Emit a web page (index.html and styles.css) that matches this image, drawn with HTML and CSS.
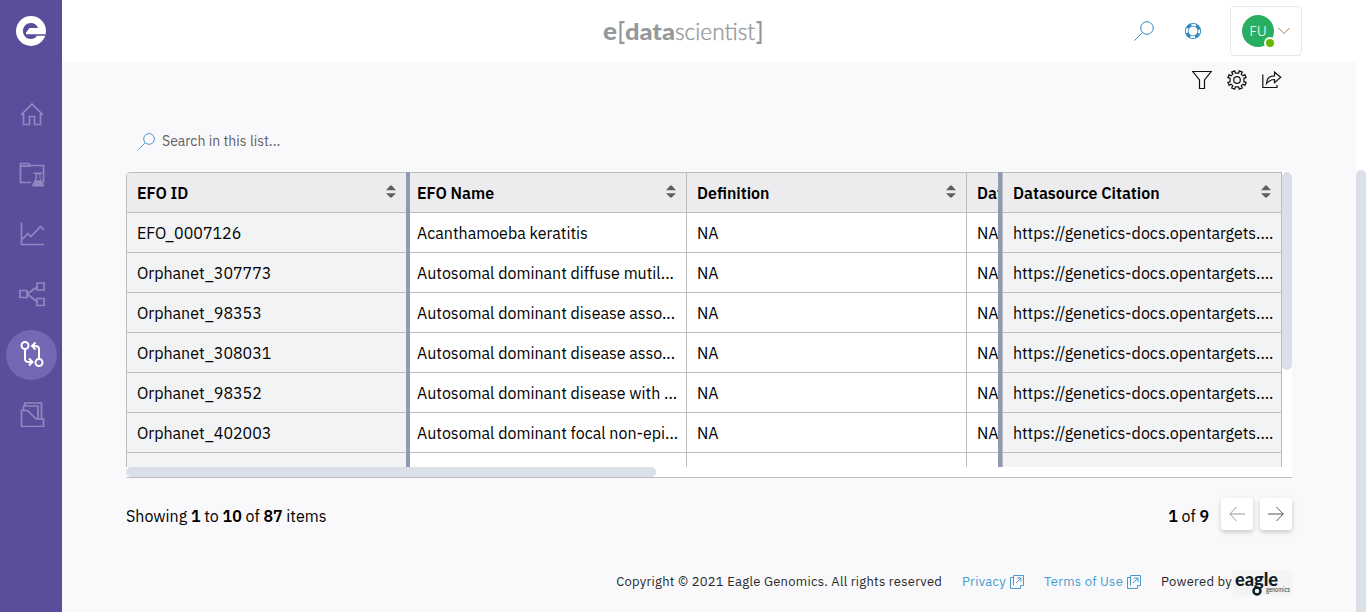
FILE: index.html
```
<!DOCTYPE html>
<html lang="en">
<head>
<meta charset="utf-8">
<title>e[datascientist]</title>
<link rel="stylesheet" href="styles.css">
</head>
<body>
<svg width="0" height="0" class="defs" aria-hidden="true">
  <symbol id="sort" viewBox="0 0 10 14"><path d="M0 5.200h10L5.700.6H4.300zM0 8.200h10L5.700 12.600H4.300z"/></symbol>
  <symbol id="search" viewBox="0 0 20 20"><circle cx="13" cy="7" r="6.300"/><path d="M8.500 11.500.4 19.600"/></symbol>
  <symbol id="external" viewBox="0 0 14 14"><path d="M3.500 2.500h-3v11h10v-3M3.500 10.500v-10h10v10h-3M6 8l5-5M7 3h4v4"/></symbol>
</svg>
<div class="app">
  <nav class="sidebar">
    <a class="brand"><svg width="30" height="30" viewBox="0 0 30 30"><circle cx="15" cy="15" r="15" fill="#fff"/><path d="M10 16.800 13.500 12h8.800C20.700 8.900 18.200 7 15 7c-4.500 0-8 3.500-8 8s3.500 8 8 8c2.600 0 4.700-1 5.800-3.200H29.500L30 18.300H10z" fill="#5a4d9b"/><path d="M10 17.200 13.500 12.500h9l1 4.700z" fill="#fff"/></svg></a>
    <a class="nav-item"><svg width="26" height="26" viewBox="0 0 26 26"><path d="M2 14 13 3l11 11M4.500 12.500v11h6v-8h5v8h6v-11"/></svg></a>
    <a class="nav-item"><svg width="26" height="26" viewBox="0 0 26 26"><path d="M12 21.500H1.500v-19h8l2 2h13V22M1.500 5.200h10"/><path class="solid" d="M14.500 11.500h8.500v1.500h-1.500v4.500l4 8H12.500l4-8v-4.500h-2z"/><path class="cut" d="M18 13.500h2.500v4l1 1.800h-4.500l1-1.800z"/></svg></a>
    <a class="nav-item"><svg width="26" height="26" viewBox="0 0 26 26"><path d="M2.500 1.500v22H25M3 18.500l6-6 3 3L21.500 5.500 25 9"/></svg></a>
    <a class="nav-item"><svg width="26" height="26" viewBox="0 0 26 26"><path d="M1 9.500h7v7H1zM18 2h7v7h-7zM18 17.500h7v7h-7zM8 13l10-7M8 13l10 7.500"/></svg></a>
    <a class="nav-item active"><svg width="26" height="26" viewBox="0 0 26 26"><circle cx="6" cy="4.500" r="3.500"/><circle cx="20" cy="21.500" r="3.500"/><path d="M6 8v10q0 3 4 3h3M10 17.500l3.500 3.500L10 24.500M20 18V8q0-3-4-3h-3M16.500 1.500 13 5l3.500 3.500"/></svg></a>
    <a class="nav-item"><svg width="26" height="26" viewBox="0 0 26 26"><path d="M2.500 9.500h6l8.500 8.500h7.500v7.500h-22zM4.500 9.500V5h14.500v12.500M6 5V2h16.500V18"/></svg></a>
  </nav>
  <div class="content">
    <header class="topbar">
      <svg class="wordmark" width="162" height="32" viewBox="0 0 162 32">
        <text class="heavy" x="0" y="24" font-size="24" textLength="14" lengthAdjust="spacingAndGlyphs">e</text>
        <text class="heavy" x="22" y="24" font-size="23" textLength="50" lengthAdjust="spacingAndGlyphs">data</text>
        <text class="thin" x="72" y="24" font-size="23" textLength="80" lengthAdjust="spacingAndGlyphs">scientist</text>
        <path d="M21.500 6.100h-4v20.800h4M153.500 6.100h4v20.800h-4"/>
      </svg>
      <div class="tools">
        <svg class="blue" width="20" height="20"><use href="#search"/></svg>
        <svg class="ring" width="18" height="18" viewBox="0 0 18 18"><circle cx="9" cy="9" r="6.300" stroke="#3488bd" stroke-width="3.600"/><circle cx="9" cy="9" r="6.200" stroke="#fff" stroke-width="1.800" stroke-dasharray="4.870 4.870" stroke-dashoffset="2.435"/></svg>
        <div class="user"><span class="avatar">FU<i class="status"></i></span><svg class="chev" width="12" height="8" viewBox="0 0 12 8"><path d="m.5 1 5.500 5.500L11.500 1"/></svg></div>
      </div>
    </header>
    <div class="body">
      <main class="main">
        <div class="actions">
          <svg width="20" height="20" viewBox="0 0 20 20"><path d="M.8 1.500h18.400L12.500 10v8.500h-5V10z"/></svg>
          <svg width="20" height="20" viewBox="0 0 20 20"><circle cx="10" cy="10" r="3.300"/><path d="M8.300 3.100 7.700.9 4.700 2.100l1.100 2-1.700 1.700-2-1.100L.9 7.700l2.200.6v3.400l-2.200.6 1.200 3 2-1.100 1.700 1.700-1.100 2 3 1.200.6-2.200h3.400l.6 2.200 3-1.200-1.100-2 1.700-1.700 2 1.100 1.200-3-2.200-.6V8.300l2.200-.6-1.200-3-2 1.100-1.700-1.700 1.100-2-3-1.200-.6 2.200z"/></svg>
          <svg width="20" height="20" viewBox="0 0 20 20"><path d="M.8 4.500v13H15v-2.500M4.500 13.500c.3-5.500 3-7.700 8-7.700V2l6.200 5.300-6.200 5.300V9.500c-4 0-6 1.200-8 4z"/></svg>
        </div>
        <div class="filter"><svg class="blue" width="17" height="17"><use href="#search"/></svg><span>Search in this list...</span></div>
        <div class="grid">
          <div class="panes">
            <div class="pane left">
              <div class="cell head"><b>EFO ID</b><svg><use href="#sort"/></svg></div>
              <div class="cell">EFO_0007126</div><div class="cell">Orphanet_307773</div><div class="cell">Orphanet_98353</div><div class="cell">Orphanet_308031</div><div class="cell">Orphanet_98352</div><div class="cell">Orphanet_402003</div><div class="cell"></div>
            </div>
            <div class="pane mid">
              <div class="row head"><div class="cell name"><b>EFO Name</b><svg><use href="#sort"/></svg></div><div class="cell def"><b>Definition</b><svg><use href="#sort"/></svg></div><div class="cell date"><b>Dat</b></div></div>
              <div class="row"><div class="cell name">Acanthamoeba keratitis</div><div class="cell def">NA</div><div class="cell date">NA</div></div>
              <div class="row"><div class="cell name">Autosomal dominant diffuse mutil...</div><div class="cell def">NA</div><div class="cell date">NA</div></div>
              <div class="row"><div class="cell name">Autosomal dominant disease asso...</div><div class="cell def">NA</div><div class="cell date">NA</div></div>
              <div class="row"><div class="cell name">Autosomal dominant disease asso...</div><div class="cell def">NA</div><div class="cell date">NA</div></div>
              <div class="row"><div class="cell name">Autosomal dominant disease with ...</div><div class="cell def">NA</div><div class="cell date">NA</div></div>
              <div class="row"><div class="cell name">Autosomal dominant focal non-epi...</div><div class="cell def">NA</div><div class="cell date">NA</div></div>
              <div class="row"><div class="cell name"></div><div class="cell def"></div><div class="cell date"></div></div>
            </div>
            <div class="pane right">
              <div class="cell head"><b>Datasource Citation</b><svg><use href="#sort"/></svg></div>
              <div class="cell">https://genetics-docs.opentargets....</div><div class="cell">https://genetics-docs.opentargets....</div><div class="cell">https://genetics-docs.opentargets....</div><div class="cell">https://genetics-docs.opentargets....</div><div class="cell">https://genetics-docs.opentargets....</div><div class="cell">https://genetics-docs.opentargets....</div><div class="cell"></div>
            </div>
            <div class="vtrack"><div class="vthumb"></div></div>
          </div>
          <div class="htrack"><div class="hthumb"></div></div>
        </div>
        <div class="pager">
          <span class="showing">Showing <b>1</b> to <b>10</b> of <b>87</b> items</span>
          <span class="pages"><b>1</b> of <b>9</b></span>
          <button class="off"><svg width="16" height="16" viewBox="0 0 16 16"><path d="M16 8H.8M7.500 1 .8 8l6.700 7"/></svg></button>
          <button><svg width="16" height="16" viewBox="0 0 16 16"><path d="M0 8h15.200M8.500 1l6.700 7-6.700 7"/></svg></button>
        </div>
        <footer class="footer">
          <span class="copy">Copyright © 2021 Eagle Genomics. All rights reserved</span>
          <a class="privacy"><span>Privacy</span><svg width="14" height="14"><use href="#external"/></svg></a>
          <a class="terms"><span>Terms of Use</span><svg width="14" height="14"><use href="#external"/></svg></a>
          <span class="powered">Powered by</span>
          <svg class="eagle" width="59" height="26" viewBox="0 0 59 26"><text x="2" y="16" class="eagle-name" textLength="43" lengthAdjust="spacingAndGlyphs">eagle</text><circle cx="24" cy="21" r="3.500"/><text x="33" y="22" font-size="7" textLength="24" lengthAdjust="spacingAndGlyphs">genomics</text></svg>
        </footer>
      </main>
      <div class="page-track"><div class="page-thumb"></div></div>
    </div>
  </div>
</div>
</body>
</html>
```
FILE: styles.css
```
* { box-sizing: border-box; }
body { margin: 0; font: 16px/20px "IBM Plex Sans", Roboto, sans-serif; color: #000; background: #fff; overflow: hidden; }
svg { display: block; flex: none; fill: none; stroke-width: 1; }
b { font-weight: 600; }
.defs { position: absolute; }
.app { display: flex; height: 612px; }
.sidebar { width: 62px; background: #5a4d9b; display: flex; flex-direction: column; align-items: center; gap: 10px; }
.brand { height: 80px; padding-top: 16px; }
.nav-item { width: 51px; height: 50px; border-radius: 50%; display: flex; align-items: center; justify-content: center; padding-bottom: 2px; padding-left: 1px; }
.nav-item svg { stroke: #9288c1; stroke-width: 1.7; }
.nav-item .solid { fill: #9288c1; stroke: none; }
.nav-item .cut { fill: #5a4d9b; stroke: none; }
.nav-item.active { background: #7468b5; }
.nav-item.active svg { stroke: #fff; stroke-width: 2; }
.content { flex: 1; display: flex; flex-direction: column; }
.topbar { height: 62px; background: #fff; display: flex; align-items: center; padding: 0 64px 0 541px; justify-content: space-between; }
.wordmark { margin-top: 2px; }
.wordmark text { fill: #95989a; font-family: Lato, sans-serif; }
.wordmark .heavy { font-weight: 900; }
.wordmark .thin { font-weight: 300; stroke: #95989a; stroke-width: .4; }
.wordmark path { stroke: #95989a; stroke-width: 2.2; }
.tools { display: flex; align-items: center; }
.blue { stroke: #3488bd; }
.ring { margin: 0 28px 0 30px; }
.user { width: 72px; height: 50px; border: 1px solid #e8e8ea; border-radius: 4px; display: flex; align-items: center; padding-left: 11px; gap: 4px; }
.avatar { position: relative; width: 32px; height: 32px; border-radius: 50%; background: #27ae60; color: #fff; font: 300 13px/32px Inter, sans-serif; text-align: center; }
.status { position: absolute; right: -2px; bottom: -2px; width: 12px; height: 12px; border-radius: 50%; background: #6bb700; border: 2px solid #fff; }
.chev { stroke: #a8784c; }
.body { flex: 1; display: flex; }
.main { flex: 1; background: #f9f9fb; padding: 8px 64px 0; }
.actions { display: flex; justify-content: flex-end; gap: 15px; padding-right: 10px; stroke: #111; }
.actions svg { stroke-width: 1.2; }
.filter { display: flex; align-items: center; gap: 7px; height: 20px; margin-top: 41px; padding-left: 12px; font-size: 14px; color: #5d6065; }
.grid { margin-top: 21px; height: 306px; border-bottom: 1px solid #bdbdbd; background: #fff; border-radius: 4px 0 0 0; overflow: hidden; }
.panes { display: flex; height: 295px; }
.pane { overflow: hidden; flex: none; }
.left { width: 284px; border-left: 1px solid #bdbdbd; border-right: 4px solid #8d9bb0; background: #f2f3f5; border-radius: 4px 0 0 0; }
.mid { width: 588px; background: #fff; }
.right { width: 284px; border-left: 4px solid #8d9bb0; background: #f2f3f5; }
.row { display: flex; }
.cell { height: 40px; flex: none; border-top: 1px solid #bdbdbd; padding: 10px 10px 0; line-height: 20px; white-space: nowrap; }
.right .cell { border-left: 1px solid #bdbdbd; border-right: 1px solid #bdbdbd; }
.right .cell:not(.head) { padding-right: 0; }
.mid .name { width: 277px; padding-left: 7px; border-right: 1px solid #bdbdbd; }
.mid .name:not(.head .name) { padding-right: 0; }
.mid .def { width: 280px; border-right: 1px solid #bdbdbd; }
.mid .date { width: 31px; padding-right: 0; }
.head { background: #ececee; }
.cell.head, .head .cell { display: flex; justify-content: space-between; }
.cell svg { width: 10px; height: 14px; fill: #5f5f5f; margin-top: 2px; }
.vtrack { width: 10px; background: #fff; }
.vthumb { height: 198px; border-radius: 5px; background: #dbe0e8; }
.hthumb { width: 530px; height: 10px; border-radius: 5px; background: #dbe0e8; }
.pager { display: flex; height: 32px; margin-top: 20px; align-items: center; }
.showing { margin-right: auto; padding-top: 4px; }
.pages { margin-right: 12px; padding-top: 4px; }
button { width: 32px; height: 32px; padding: 0; border: 0; border-radius: 3px; background: #fff; box-shadow: 0 2px 5px rgba(0,0,0,.2); display: flex; justify-content: center; align-items: center; stroke: #555; }
button + button { margin-left: 7px; }
button.off { stroke: #999; }
.footer { display: flex; height: 26px; margin-top: 39px; align-items: center; justify-content: flex-end; font-size: 13px; letter-spacing: .26px; color: #292929; }
.footer a { display: flex; gap: 4px; align-items: center; margin-left: 20px; color: #4a9bcb; stroke: #4a9bcb; }
.powered { margin: 0 1px 0 20px; }
.eagle { background: #f4f4f4; fill: #101d26; letter-spacing: 0; margin-top: 1px; }
.eagle .eagle-name { font: 900 18px Lato, sans-serif; }
.eagle circle { fill: none; stroke: #101d26; stroke-width: 2.500; }
.page-track { width: 10px; padding-top: 108px; background: #fff; }
.page-thumb { height: 442px; border-radius: 5px 5px 0 0; background: #dbe0e8; }
```
